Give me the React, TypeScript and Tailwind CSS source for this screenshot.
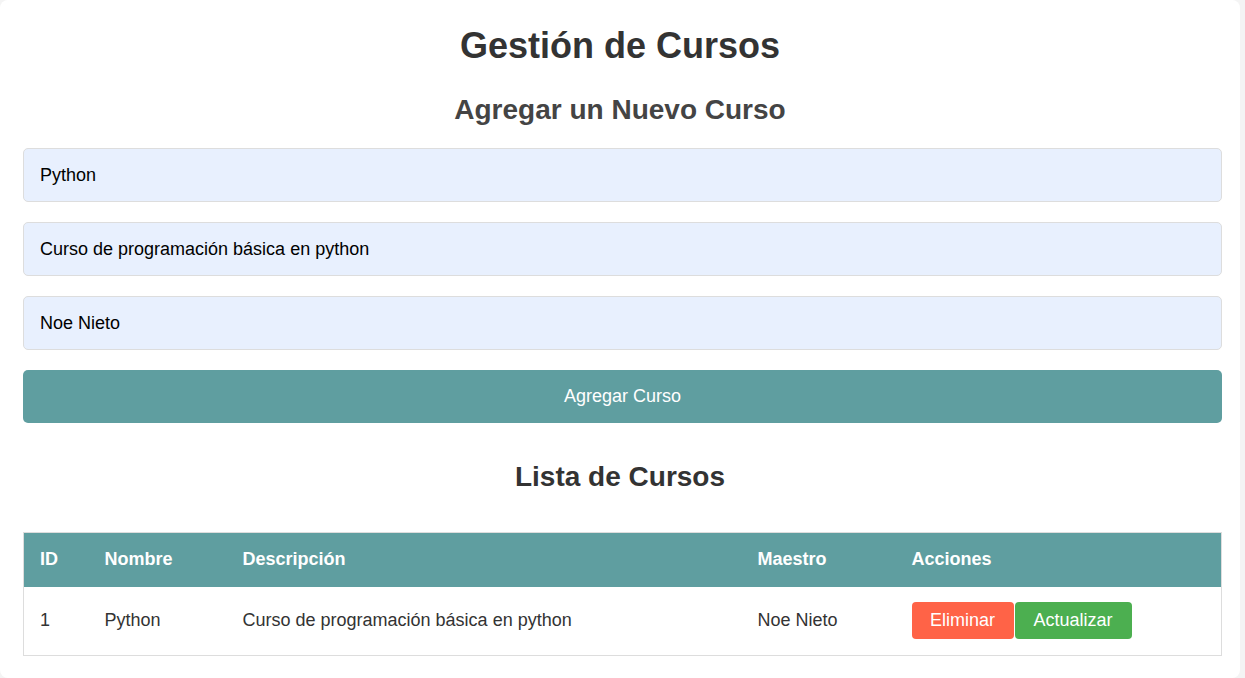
export default function App() {
  const f = { fontFamily: '"Liberation Sans", Arial, sans-serif' };
  return (
    <div className="min-h-[678px] bg-[#f4f4f4]" style={f}>
      <div className="bg-white rounded-lg min-h-[678px] px-[23px] pt-[22px] w-[1240px]">
        <h1 className="text-center text-[36px] font-bold text-[#333] leading-[48px]">Gestión de Cursos</h1>
        <h2 className="text-center text-[28px] font-bold text-[#444] leading-[36px] mt-[22px]">Agregar un Nuevo Curso</h2>
        <div className="flex flex-col gap-[20px] mt-[20px] w-[1199px]">
          {["Python", "Curso de programación básica en python", "Noe Nieto"].map((v) => (
            <input key={v} readOnly value={v} className="h-[54px] bg-[#e8f0fe] border border-[#ddd] rounded-[5px] px-[16px] text-[18px] text-black outline-none" style={f} />
          ))}
          <button className="h-[53px] bg-[#5f9ea0] text-white text-[18px] rounded-[5px]" style={f}>Agregar Curso</button>
        </div>
        <h2 className="text-center text-[28px] font-bold text-[#333] leading-[36px] mt-[36px]">Lista de Cursos</h2>
        <table className="mt-[37px] w-[1199px] border border-[#ddd] border-collapse text-[18px]">
          <thead>
            <tr className="bg-[#5f9ea0] text-white font-bold h-[54px] text-left">
              <th className="w-[65px] px-[16px]">ID</th>
              <th className="w-[138px] px-[16px]">Nombre</th>
              <th className="w-[515px] px-[16px]">Descripción</th>
              <th className="w-[154px] px-[16px]">Maestro</th>
              <th className="px-[16px]">Acciones</th>
            </tr>
          </thead>
          <tbody>
            <tr className="h-[69px] text-[#333]">
              <td className="px-[16px]">1</td>
              <td className="px-[16px]">Python</td>
              <td className="px-[16px]">Curso de programación básica en python</td>
              <td className="px-[16px]">Noe Nieto</td>
              <td className="px-[16px]">
                <div className="flex gap-[1px]">
                  <button className="h-[37px] w-[102px] bg-[#ff6347] text-white rounded-[4px]" style={f}>Eliminar</button>
                  <button className="h-[37px] w-[117px] bg-[#4caf50] text-white rounded-[4px]" style={f}>Actualizar</button>
                </div>
              </td>
            </tr>
          </tbody>
        </table>
      </div>
    </div>
  );
}
